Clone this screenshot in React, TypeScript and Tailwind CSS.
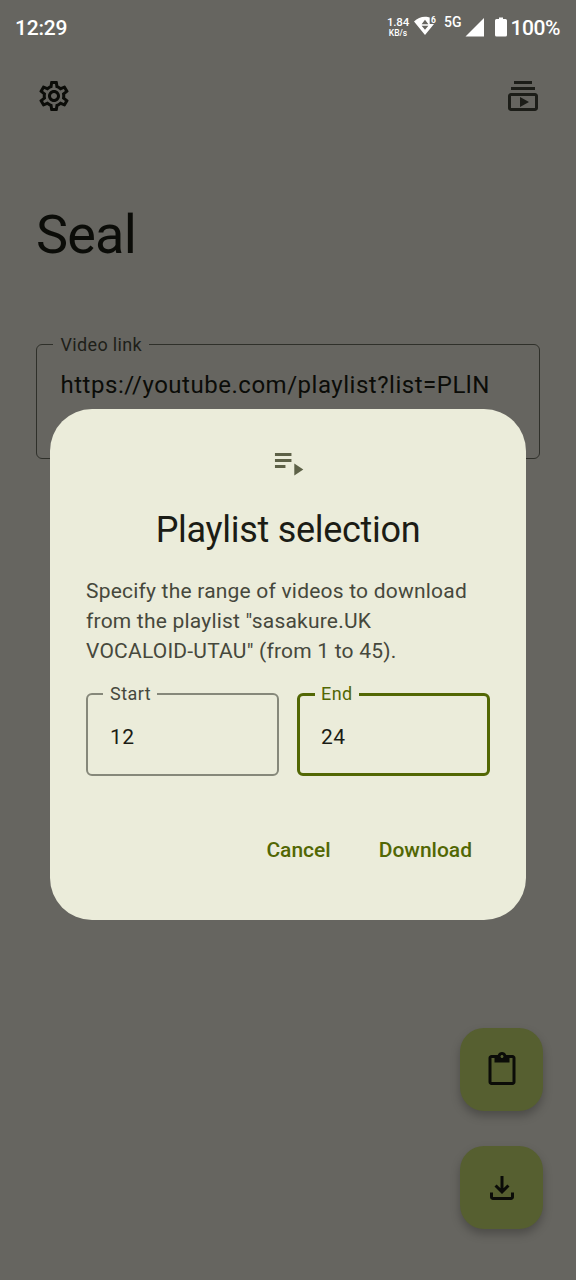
import React from "react";
import {
  MdContentPaste,
  MdOutlineFileDownload,
  MdOutlineSettings,
  MdOutlineSubscriptions,
} from "react-icons/md";

function StatusBar() {
  return (
    <header className="flex h-[54px] items-center justify-between pl-[15px] pr-4 pt-px font-medium text-white">
      <span className="text-[21px] leading-6 tracking-[-0.2px]">12:29</span>
      <div className="flex h-6 items-start">
        <div className="flex w-[24px] flex-col items-center pt-px whitespace-nowrap">
          <span className="text-[11.5px] leading-[11px] tracking-[-0.2px]">1.84</span>
          <span className="text-[8.5px] leading-[10px]">KB/s</span>
        </div>
        <svg className="-mt-px ml-[4px] h-6 w-6" viewBox="0 0 24 24" fill="currentColor">
          <path d="M0 6.500C3 3.300 7 1.700 11 1.700c2.200 0 3.600.3 4.700.8v6.400h4.300L11 20z" />
          <path className="fill-[#666560]" d="M11 4.800l3.400 4.500H7.600zM7.600 10.800h6.800L11 14.800z" />
          <text x="17" y="8" className="text-[8.500px] font-bold">6</text>
        </svg>
        <span className="-mt-[2px] ml-[6px] text-[14px] leading-4">5G</span>
        <svg className="ml-[3px] mt-px h-5 w-5" viewBox="0 0 20 20" fill="currentColor">
          <path d="M19 1v18.500H.5z" />
        </svg>
        <svg className="ml-[10px] mt-px h-5 w-3" viewBox="0 0 12 20" fill="currentColor">
          <path d="M4 .500h4V2h2.500q1.500 0 1.500 1.500v14.500q0 1.500-1.500 1.500h-9Q0 19.500 0 18v-14.500Q0 2 1.500 2H4z" />
        </svg>
        <span className="ml-[4px] text-[21px] leading-6 tracking-[-0.45px]">100%</span>
      </div>
    </header>
  );
}

function RangeField({ label, value, active }: { label: string; value: string; active?: boolean }) {
  return (
    <fieldset
      className={
        active
          ? "h-[92px] w-[193px] min-w-0 rounded-md border-[3px] border-[#526704] pl-[15px]"
          : "h-[92px] w-[193px] min-w-0 rounded-md border-2 border-[#86887a] pl-[15px]"
      }
    >
      <legend
        className={
          active
            ? "h-5 pl-[6px] pr-[6px] text-[18px] leading-5 tracking-[0.4px] text-[#526704]"
            : "h-5 pl-[7px] pr-[6px] text-[18px] leading-5 tracking-[0.45px] text-[#46483c]"
        }
      >
        {label}
      </legend>
      <div
        className={
          active
            ? "pl-[6px] pt-[18px] text-[21px] leading-[30px] tracking-[0.5px] text-[#1b1c15]"
            : "pl-[7px] pt-[18px] text-[21px] leading-[30px] tracking-[0.5px] text-[#1b1c15]"
        }
      >
        {value}
      </div>
    </fieldset>
  );
}

function PlaylistDialog() {
  return (
    <div
      role="dialog"
      className="absolute left-[50px] top-[408.500px] flex h-[511px] w-[476px] flex-col rounded-[42px] bg-[#ebecda] px-9 pt-[35.500px]"
    >
      <svg className="h-9 w-9 self-center text-[#5d6147]" viewBox="0 0 24 24" fill="currentColor">
        <path d="M3.300 6h11v2h-11zM3.300 10h11v2h-11zM3.300 14h7v2h-7zM16.200 13v8l6-4z" />
      </svg>
      <h2 className="mt-[26px] text-center text-[36px] leading-[48px] tracking-[-0.29px] text-[#1b1c15]">
        Playlist selection
      </h2>
      <p className="mt-[22px] text-[21px] leading-[30px] tracking-[0.21px] text-[#46483c]">
        Specify the range of videos to download
        <br />
        from the playlist "sasakure.UK
        <br />
        VOCALOID-UTAU" (from 1 to 45).
      </p>
      <div className="mt-[18px] flex gap-[18px]">
        <RangeField label="Start" value="12" />
        <RangeField label="End" value="24" active />
      </div>
      <div className="mt-[44px] flex justify-end gap-12 pr-[18px] text-[21px] font-medium leading-[60px] text-[#526704]">
        <button>Cancel</button>
        <button>Download</button>
      </div>
    </div>
  );
}

export default function App() {
  return (
    <div className="relative flex h-[1280px] w-[576px] flex-col overflow-hidden bg-[#666560] font-[Roboto,sans-serif] text-[#0b0c08]">
      <StatusBar />
      <nav className="mt-6 flex justify-between pl-[35.500px] pr-[35px]">
        <MdOutlineSettings className="size-9" />
        <MdOutlineSubscriptions className="size-9 text-[#1c1d18]" />
      </nav>
      <main className="flex flex-col px-9">
        <h1 className="mt-[88px] text-[54px] leading-[66px] tracking-[-0.8px]">Seal</h1>
        <fieldset className="mt-[66px] h-[125px] rounded-md border-[1.5px] border-[#2f302a] pl-4">
          <legend className="h-5 pl-[7.500px] pr-[7px] text-[18px] leading-[21px] tracking-[0.35px] text-[#1e1f19]">
            Video link
          </legend>
          <div className="pl-[7.500px] pt-[13px] text-[24px] leading-9 tracking-[0.52px]">
            https://youtube.com/playlist?list=PLlN
          </div>
        </fieldset>
      </main>
      <div className="mb-[51px] mr-[33px] mt-auto flex flex-col gap-[35px] self-end">
        <button className="flex size-[83px] items-center justify-center rounded-3xl bg-[#565f30] shadow-[0_5px_10px_rgba(0,0,0,0.25)]">
          <MdContentPaste className="size-9" />
        </button>
        <button className="flex size-[83px] items-center justify-center rounded-3xl bg-[#565f30] shadow-[0_5px_10px_rgba(0,0,0,0.25)]">
          <MdOutlineFileDownload className="size-9" />
        </button>
      </div>
      <PlaylistDialog />
    </div>
  );
}
